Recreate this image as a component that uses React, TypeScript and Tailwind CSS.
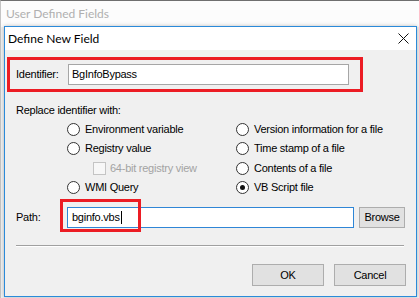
import React from "react";

const sans = { fontFamily: '"Liberation Sans", Arial, sans-serif', letterSpacing: "-0.25px" };
const ui = { fontFamily: 'Lato, "Noto Sans", sans-serif', letterSpacing: "0px" };

function Radio({ label, checked }: { label: string; checked?: boolean }) {
  return (
    <div className="flex items-center gap-[5px]">
      <span className="w-[13px] h-[13px] rounded-full border border-[#333333] bg-white flex items-center justify-center">
        {checked && <span className="w-[5px] h-[5px] rounded-full bg-[#111111]" />}
      </span>
      <span className="text-[11px] leading-[13px] text-black whitespace-nowrap">{label}</span>
    </div>
  );
}

export default function App() {
  return (
    <div className="relative w-[419px] h-[298px] overflow-hidden bg-[#f0f0f0]" style={sans}>
      {/* parent window */}
      <div className="flex flex-col w-full h-full border-t border-[#6f6f6f] border-l border-l-[#c4c4c4]">
        <div className="h-[26px] bg-[#fcfcfc] flex items-center pl-[5px]">
          <span className="text-[12px] text-[#b0b0b0] leading-none" style={ui}>
            User Defined Fields
          </span>
        </div>
        <div className="flex-1 bg-[#f0f0f0]" />
      </div>

      {/* dialog window */}
      <div className="absolute left-[4px] top-[26px] w-[413px] h-[271px] border border-[#2b8ad9] bg-[#f0f0f0] flex flex-col shadow-[0_0_4px_rgba(0,0,0,0.25)]">
        <div className="h-[23px] bg-white flex items-center justify-between pl-[3px] pr-[7px]">
          <span className="text-[12px] text-black leading-none" style={ui}>
            Define New Field
          </span>
          <svg width="11" height="11" viewBox="0 0 11 11">
            <path d="M0.5 0.5 L10.5 10.5 M10.5 0.5 L0.5 10.5" stroke="#111" strokeWidth="1" />
          </svg>
        </div>

        <div className="flex flex-col">
          {/* identifier row */}
          <div className="ml-[2px] mt-[7px] w-[356px] h-[35px] border-[3px] border-[#ec1c24] flex items-center pl-[6px]">
            <span className="w-[52px] text-[11px] text-black">Identifier:</span>
            <div className="w-[281px] h-[21px] bg-white border border-[#a6a6a6] flex items-center pl-[3px] text-[11px] text-black">
              BgInfoBypass
            </div>
          </div>

          <div className="ml-[11px] mt-[12px] text-[11px] leading-[13px] text-black">Replace identifier with:</div>

          <div className="mt-[2px] ml-[62px] grid grid-cols-[170px_1fr]">
            <div className="flex flex-col">
              <div className="h-[20px] flex items-center"><Radio label="Environment variable" /></div>
              <div className="h-[19px] flex items-center"><Radio label="Registry value" /></div>
              <div className="h-[20px] flex items-center pl-[26px] gap-[4px]">
                <span className="w-[13px] h-[13px] border border-[#c4c4c4] bg-[#f7f7f7]" />
                <span className="text-[11px] leading-[13px] text-[#a3a3a3] whitespace-nowrap">64-bit registry view</span>
              </div>
              <div className="h-[19px] flex items-center"><Radio label="WMI Query" /></div>
            </div>
            <div className="flex flex-col -ml-[1px]">
              <div className="h-[20px] flex items-center"><Radio label="Version information for a file" /></div>
              <div className="h-[19px] flex items-center"><Radio label="Time stamp of a file" /></div>
              <div className="h-[20px] flex items-center"><Radio label="Contents of a file" /></div>
              <div className="h-[19px] flex items-center"><Radio label="VB Script file" checked /></div>
            </div>
          </div>

          {/* path row */}
          <div className="mt-[10px] ml-[11px] flex items-center h-[21px]">
            <span className="w-[51px] text-[11px] text-black">Path:</span>
            <div className="relative w-[287px] h-[21px] bg-white border border-[#2f86d6] flex items-center pl-[4px] text-[11px] text-black">
              <span>bginfo.vbs</span>
              <span className="w-px h-[13px] bg-black ml-[1px]" />
              <div className="absolute left-[-8px] top-[-9px] w-[81px] h-[33px] border-[3px] border-[#ec1c24]" />
            </div>
            <button className="ml-[5px] w-[46px] h-[21px] bg-[#e1e1e1] border border-[#adadad] text-[11px] text-black flex items-center justify-center">
              Browse
            </button>
          </div>

          <div className="mt-[17px] ml-[11px] w-[388px] h-[2px] border-t border-[#a0a0a0] border-b border-b-white" />

          <div className="mt-[17px] flex justify-end gap-[10px] pr-[10px]">
            <button className="w-[72px] h-[22px] bg-[#e1e1e1] border border-[#adadad] text-[11px] text-black flex items-center justify-center">
              OK
            </button>
            <button className="w-[72px] h-[22px] bg-[#e1e1e1] border border-[#adadad] text-[11px] text-black flex items-center justify-center">
              Cancel
            </button>
          </div>
        </div>
      </div>
    </div>
  );
}
